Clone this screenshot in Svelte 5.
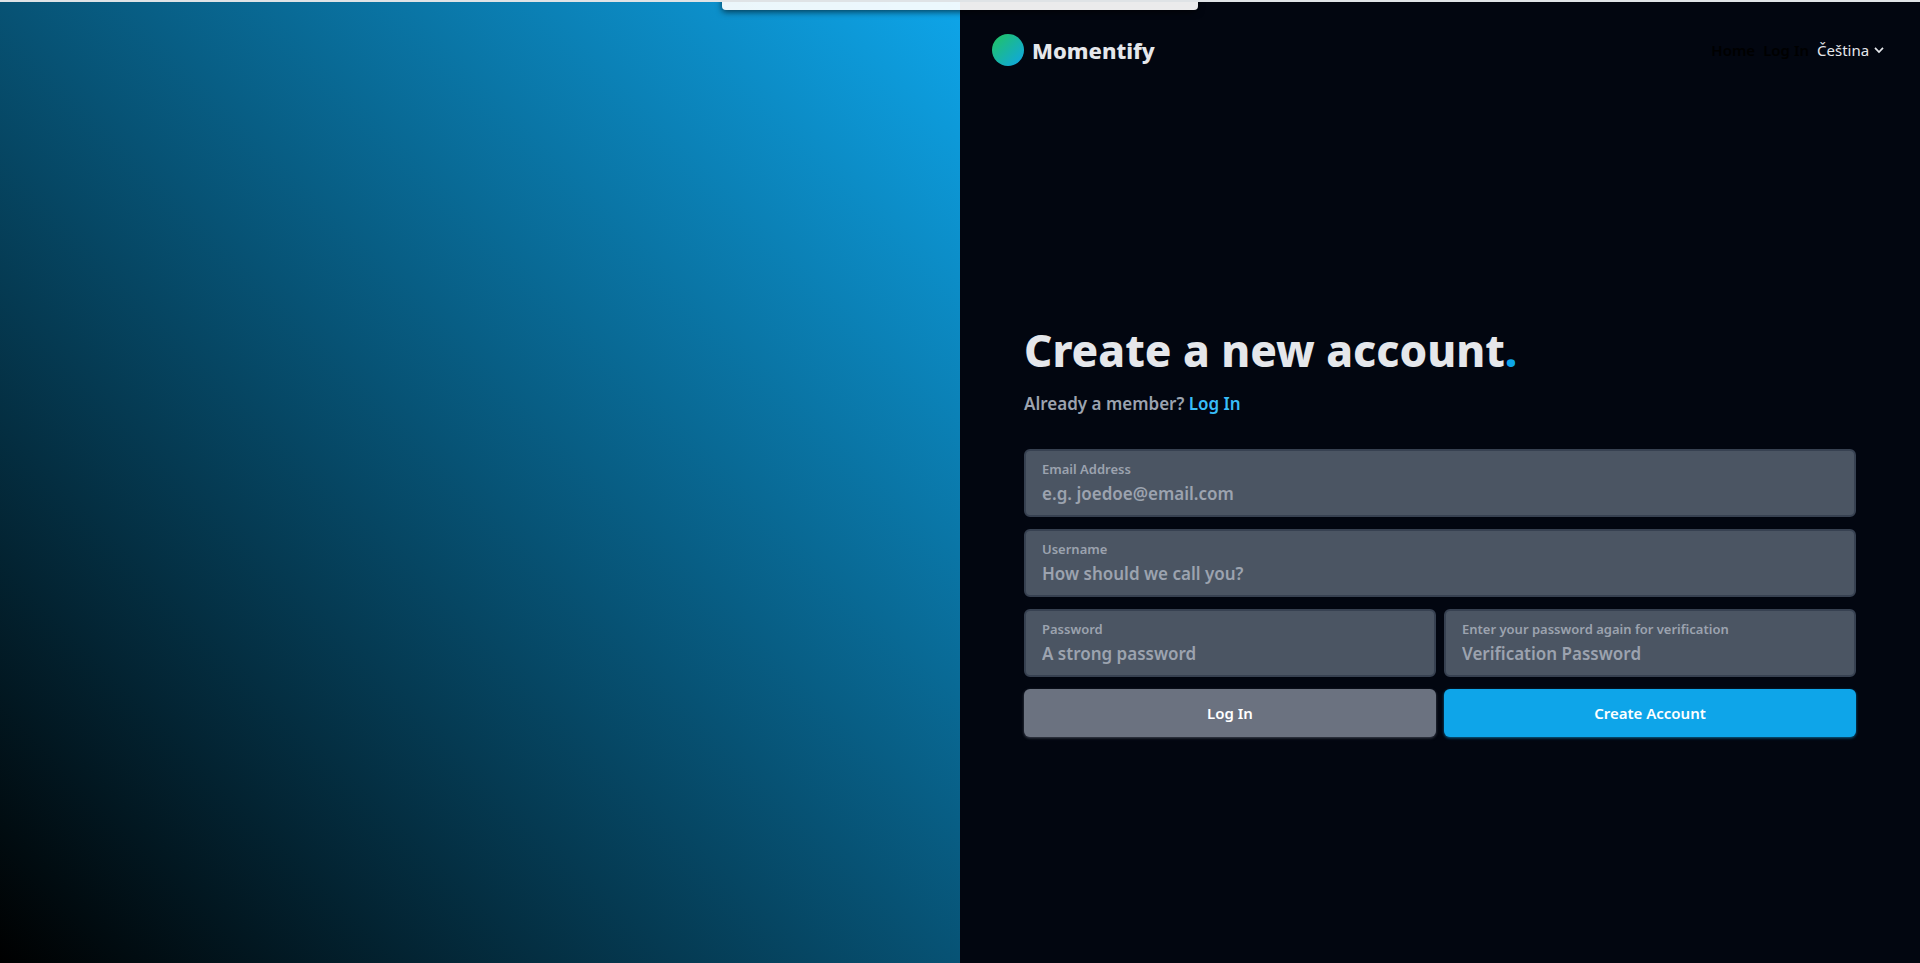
<script>
  let language = $state('cs');
  const fields = [
    { id: 'email', type: 'email', label: 'Email Address', hint: 'e.g. joedoe@email.com', wide: true },
    { id: 'username', type: 'text', label: 'Username', hint: 'How should we call you?', wide: true },
    { id: 'password', type: 'password', label: 'Password', hint: 'A strong password' },
    { id: 'verify', type: 'password', label: 'Enter your password again for verification', hint: 'Verification Password' }
  ];
</script>

<div class="page">
  <div class="toast"></div>
  <div class="art"></div>
  <div class="side">
    <header>
      <a class="brand" href="#home"><span class="logo"></span>Momentify</a>
      <nav>
        <a href="#home">Home</a>
        <a href="#login">Log In</a>
        <div class="language">
          <select aria-label="Language" bind:value={language}>
            <option value="cs">Čeština</option>
          </select>
          <svg viewBox="0 0 10 8" width="10" height="8" aria-hidden="true"><path d="M1 1.8 5 6 9 1.8" fill="none" stroke="currentColor" stroke-width="1.7" /></svg>
        </div>
      </nav>
    </header>
    <main>
      <h1>Create a new account<span>.</span></h1>
      <p>Already a member? <a href="#login">Log In</a></p>
      <form>
        {#each fields as field}
          <div class="field" class:wide={field.wide}>
            <label for={field.id}>{field.label}</label>
            <input id={field.id} type={field.type} placeholder={field.hint} />
          </div>
        {/each}
        <button type="button">Log In</button>
        <button type="submit" class="primary">Create Account</button>
      </form>
    </main>
  </div>
</div>

<style>
  :global(body) {
    margin: 0;
  }
  .page {
    display: grid;
    grid-template-columns: 1fr 1fr;
    position: relative;
    overflow: hidden;
    box-sizing: border-box;
    min-height: 100vh;
    border-top: 2px solid #dfe3e6;
    background: #020610;
    color: #e5e7eb;
    font-family: "Noto Sans", sans-serif;
    font-size: 15px;
    line-height: 24px;
  }
  .toast {
    position: absolute;
    top: -8px;
    left: 50%;
    width: 476px;
    height: 16px;
    transform: translateX(-50%);
    border-radius: 4px;
    background: rgba(255, 255, 255, 0.92);
    box-shadow: 0 2px 6px rgba(0, 0, 0, 0.6);
  }
  .art {
    background: linear-gradient(to top right, #000, #0ea5e9);
  }
  .side {
    display: flex;
    flex-direction: column;
  }
  header {
    display: flex;
    justify-content: space-between;
    align-items: center;
    padding: 32px;
  }
  a {
    text-decoration: none;
  }
  .brand {
    display: flex;
    align-items: center;
    gap: 8px;
    color: #e5e7eb;
    font-size: 22px;
    line-height: 32px;
    font-weight: 800;
  }
  .logo {
    width: 32px;
    height: 32px;
    border-radius: 50%;
    background: linear-gradient(to bottom right, #22c55e, #0ea5e9);
  }
  nav {
    display: flex;
    align-items: center;
    gap: 8px;
  }
  nav a {
    color: #000;
    font-weight: 600;
  }
  .language {
    display: flex;
    align-items: center;
    gap: 4px;
    padding-right: 4px;
  }
  select {
    appearance: none;
    padding: 0;
    border: 0;
    background: none;
    color: #e5e7eb;
    font: inherit;
  }
  main {
    display: flex;
    flex: 1;
    flex-direction: column;
    justify-content: center;
    padding: 0 64px;
  }
  h1 {
    margin: 0 0 14px;
    font-size: 44px;
    line-height: 50px;
    font-weight: 800;
  }
  h1 span {
    color: #0ea5e9;
  }
  p {
    margin: 0 0 30px;
    color: #9ca3af;
    font-size: 17px;
    line-height: 30px;
    font-weight: 600;
  }
  p a {
    color: #38bdf8;
  }
  form {
    display: grid;
    grid-template-columns: 1fr 1fr;
    gap: 12px 8px;
  }
  .field {
    display: flex;
    flex-direction: column;
    padding: 8px 16px 6px;
    border: 2px solid #374151;
    border-radius: 6px;
    background: #4b5563;
  }
  .wide {
    grid-column: span 2;
  }
  label {
    color: #9ca3af;
    font-size: 13px;
    line-height: 20px;
    font-weight: 600;
  }
  input {
    height: 30px;
    padding: 0;
    border: 0;
    outline: 0;
    background: none;
    color: #e5e7eb;
    font: inherit;
    font-size: 17px;
    font-weight: 600;
  }
  input::placeholder {
    color: #9ca3af;
    opacity: 1;
  }
  button {
    height: 48px;
    border: 0;
    border-radius: 6px;
    background: #6b7280;
    box-shadow: 0 1px 3px rgba(107, 114, 128, 0.6);
    color: #fff;
    font: inherit;
    font-weight: 600;
  }
  .primary {
    background: #0ea5e9;
    box-shadow: 0 1px 3px rgba(14, 165, 233, 0.6);
  }
</style>
